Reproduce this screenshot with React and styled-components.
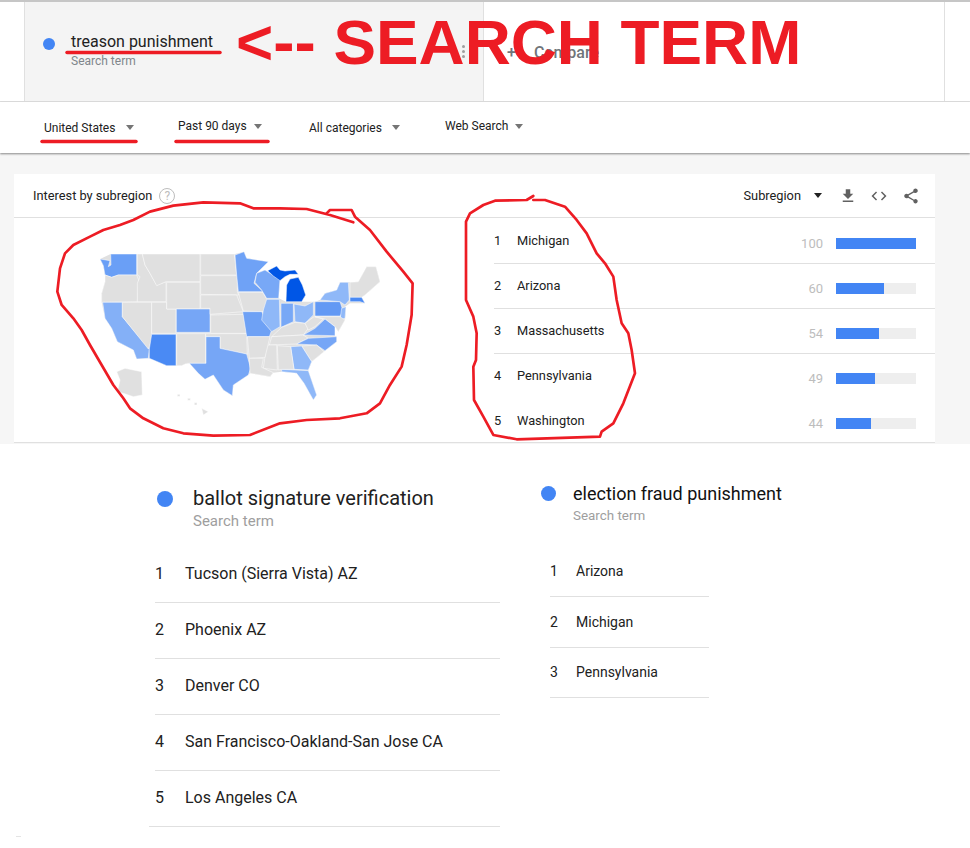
import styled, { createGlobalStyle } from "styled-components";

const GlobalStyle = createGlobalStyle`
  html, body {
    margin: 0;
    padding: 0;
    background: #fff;
    font-family: Roboto, "Liberation Sans", sans-serif;
  }
`;

const Page = styled.div`
  position: relative;
  width: 970px;
  height: 848px;
  overflow: hidden;
  background: #fff;
  color: #212121;
`;

const TermBar = styled.div`
  display: grid;
  grid-template-columns: 24px 460px 461px 1fr;
  height: 99px;
  border-top: 2px solid #c6c6c6;
  border-bottom: 1px solid #e0e0e0;
`;
const Spacer = styled.div``;
const TermPanel = styled.div`
  display: flex;
  align-items: flex-start;
  padding: 31px 18px 0 18px;
  background: #f4f4f4;
  border-left: 1px solid #e0e0e0;
  border-right: 1px solid #e0e0e0;
`;
const Dot = styled.span`
  flex: none;
  width: ${(p) => p.$size}px;
  height: ${(p) => p.$size}px;
  margin-top: ${(p) => p.$top}px;
  border-radius: 50%;
  background: #4285f4;
`;
const TermText = styled.div`
  flex: 1;
  margin-left: 16px;
  margin-top: -1px;
`;
const TermName = styled.div`
  font-size: 16px;
  line-height: 19px;
  color: #212121;
`;
const TermHint = styled.div`
  font-size: 12px;
  line-height: 15px;
  margin-top: 3px;
  color: #80868b;
`;
const Kebab = styled.span`
  display: flex;
  flex-direction: column;
  gap: 2px;
  margin-top: 12px;
  i {
    display: block;
    width: 3px;
    height: 3px;
    border-radius: 50%;
    background: #9e9e9e;
  }
`;
const ComparePanel = styled.div`
  display: flex;
  align-items: flex-start;
  gap: 18px;
  padding: 41px 0 0 23px;
  border-right: 1px solid #e0e0e0;
  color: #70757a;
  font-size: 16px;
  font-weight: 500;
  line-height: 19px;
`;

const FilterBar = styled.div`
  display: grid;
  grid-template-columns: 134px 131px 136px auto;
  align-items: center;
  height: 51px;
  padding-left: 44px;
  background: #fff;
  box-shadow: 0 1px 2px rgba(0, 0, 0, 0.45);
  position: relative;
`;
const Filter = styled.div`
  display: flex;
  align-items: center;
  font-size: 12px;
  line-height: 14px;
  color: #212121;
  margin-bottom: ${(p) => (p.$raised ? 3 : 0)}px;
`;
const Caret = styled.span`
  width: 0;
  height: 0;
  margin-left: ${(p) => p.$gap}px;
  border-left: 4px solid transparent;
  border-right: 4px solid transparent;
  border-top: 5px solid ${(p) => p.$color || "#757575"};
`;

const Content = styled.div`
  height: 291px;
  padding: 21px 35px 0 14px;
  background: #f6f6f6;
  box-sizing: border-box;
`;
const Card = styled.section`
  height: 269px;
  background: #fff;
  border-bottom: 1px solid #e0e0e0;
  box-sizing: border-box;
`;
const CardHeader = styled.header`
  display: flex;
  align-items: center;
  height: 43px;
  padding-left: 19px;
  border-bottom: 1px solid #e0e0e0;
`;
const CardTitle = styled.h2`
  margin: 0 7px 0 0;
  font-size: 12.8px;
  font-weight: 400;
  color: #212121;
`;
const HelpIcon = styled.span`
  display: flex;
  align-items: center;
  justify-content: center;
  width: 14px;
  height: 14px;
  border: 1px solid #bdbdbd;
  border-radius: 50%;
  font-size: 12px;
  color: #bdbdbd;
`;
const HeaderTools = styled.div`
  display: flex;
  align-items: center;
  margin-left: auto;
  padding-right: 15px;
  font-size: 12.8px;
  color: #212121;
`;
const ToolIcon = styled.svg`
  width: 18px;
  height: 18px;
  margin-left: ${(p) => p.$gap}px;
  fill: #616161;
`;
const CardBody = styled.div`
  display: grid;
  grid-template-columns: 480px 1fr;
`;
const MapBox = styled.div`
  padding-left: 26px;
  height: 224px;
  overflow: hidden;
`;
const MapSvg = styled.svg`
  display: block;
  width: 380px;
  height: 225px;
`;
const RegionList = styled.ol`
  margin: 0;
  padding: 1px 0 0;
  list-style: none;
`;
const RegionRow = styled.li`
  display: flex;
  align-items: center;
  height: 44px;
  border-bottom: 1px solid ${(p) => (p.$plain ? "transparent" : "#e0e0e0")};
  font-size: 12.8px;
  color: #212121;
`;
const Rank = styled.span`
  width: 23px;
  margin-bottom: 2px;
`;
const RegionName = styled.span`
  flex: 1;
  margin-bottom: 2px;
`;
const Score = styled.span`
  width: 40px;
  margin-top: 5px;
  text-align: right;
  font-size: 13px;
  color: #bdbdbd;
`;
const Track = styled.div`
  width: 80px;
  height: 11px;
  margin: 5px 19px 0 13px;
  background: #eeeeee;
`;
const Fill = styled.div`
  height: 100%;
  background: #4285f4;
`;

const Columns = styled.div`
  display: flex;
  padding-left: 155px;
  background: #fff;
`;
const TermColumn = styled.div`
  width: ${(p) => p.$width}px;
  margin-right: ${(p) => p.$gap || 0}px;
`;
const TermHeading = styled.div`
  display: flex;
  align-items: flex-start;
  height: ${(p) => (p.$small ? 63.5 : 60)}px;
  padding-top: ${(p) => (p.$small ? 39 : 43)}px;
  padding-left: ${(p) => (p.$small ? 0 : 2)}px;
  margin-left: ${(p) => (p.$small ? -9 : 0)}px;
`;
const HeadingText = styled.div`
  margin-left: ${(p) => (p.$small ? 17 : 20)}px;
  margin-top: -1px;
`;
const HeadingName = styled.div`
  font-size: ${(p) => (p.$small ? 18 : 20)}px;
  line-height: 24px;
  white-space: nowrap;
  color: ${(p) => (p.$small ? "#111" : "#212121")};
`;
const HeadingHint = styled.div`
  font-size: ${(p) => (p.$small ? 13.4 : 15)}px;
  line-height: 16px;
  margin-top: ${(p) => (p.$small ? 2 : 3)}px;
  color: #9e9e9e;
`;
const ResultList = styled.ol`
  margin: 0;
  padding: 0;
  list-style: none;
`;
const ResultRow = styled.li`
  display: flex;
  align-items: center;
  height: ${(p) => p.$height - 1 - (p.$lift || 0)}px;
  padding-bottom: ${(p) => p.$lift || 0}px;
  border-bottom: 1px solid #e0e0e0;
  font-size: ${(p) => p.$font}px;
  color: #212121;
  margin-left: ${(p) => (p.$outdent ? -6 : 0)}px;
  padding-left: ${(p) => (p.$outdent ? 6 : 0)}px;
`;
const ResultRank = styled.span`
  width: ${(p) => p.$width}px;
`;

const Annotations = styled.svg`
  position: absolute;
  left: 0;
  top: 0;
  width: 970px;
  height: 848px;
  pointer-events: none;
  fill: none;
  stroke: #ed1c24;
  stroke-linecap: round;
  stroke-linejoin: round;
`;
const Callout = styled.div`
  position: absolute;
  left: 236px;
  top: 4px;
  font-family: "Liberation Sans", Arial, sans-serif;
  font-weight: 700;
  font-size: 63.8px;
  line-height: 76px;
  white-space: nowrap;
  color: #ed1c24;
`;
const Speck = styled.span`
  position: absolute;
  left: 16px;
  top: 836px;
  width: 5px;
  height: 1px;
  background: #e4e4e4;
`;

const GREY = "#e0e0e0";
const LIGHT = "#8fb8f8";
const MID = "#76a6f6";
const LOWER_48 =
  "180,192 212,177 585,177 612,170 620,190 685,200 650,235 675,225 720,252 716,310 738,320 740,270 750,252 775,247 787,270 797,300 785,320 825,320 840,315 855,295 890,285 900,262 930,262 955,260 980,215 1008,215 1020,260 975,300 965,307 975,325 930,325 915,335 918,350 915,375 895,410 885,395 885,422 890,425 890,440 855,467 815,500 805,527 830,600 820,615 792,565 770,535 725,530 700,533 690,545 630,535 625,540 580,570 577,602 550,585 520,540 495,553 475,535 448,505 410,512 380,512 328,490 290,492 280,465 232,440 215,400 195,370 185,322 185,295 195,260 195,240 190,212";
const STATES = [
  ["#6a9ff6", "180,192 210,197 205,215 213,210 212,177 290,177 290,240 235,240 215,247 195,240 190,212"],
  [GREY, "195,240 215,247 235,240 290,240 296,255 292,320 185,322 185,295 195,260"],
  ["#84b0f7", "188,322 247,322 247,365 328,462 325,490 290,492 280,465 232,440 215,400 195,370"],
  [GREY, "292,177 307,177 315,210 330,235 350,270 378,260 378,320 292,320 292,265 300,245 292,240"],
  [GREY, "307,177 480,177 480,260 378,260 350,272 330,235 315,210"],
  [GREY, "247,322 335,322 335,438 325,462 247,365"],
  [GREY, "335,322 380,322 380,342 408,342 408,415 335,415"],
  ["#4a8af4", "335,418 408,418 408,512 380,512 328,490 328,462"],
  [GREY, "380,262 480,262 480,342 380,342"],
  [MID, "409,342 510,342 510,412 409,412"],
  [GREY, "410,416 497,416 497,505 440,505 425,512 410,512"],
  [GREY, "482,177 583,177 590,240 482,240"],
  [GREY, "482,242 592,242 592,290 596,300 482,298"],
  [GREY, "482,300 590,300 610,350 510,358 510,340 482,340"],
  [GREY, "512,360 610,358 620,415 512,415"],
  [GREY, "497,416 620,416 622,478 560,465 540,460 540,425 497,425"],
  [MID, "498,425 540,425 540,460 620,477 632,520 625,540 580,570 577,602 550,585 520,540 495,553 475,535 448,505 498,505"],
  ["#6fa2f6", "585,180 612,170 620,190 685,200 650,235 642,265 670,290 595,290 590,240"],
  [GREY, "595,292 668,292 685,320 670,350 610,348"],
  ["#6ea1f5", "608,350 665,350 695,405 688,425 620,425"],
  ["#78a8f6", "650,235 675,225 690,235 720,252 716,310 680,310 665,285 645,262"],
  [LIGHT, "680,313 718,313 720,395 695,410 665,375 670,345"],
  ["#0056e6", "738,320 740,270 750,252 775,247 787,270 797,300 785,320"],
  ["#0056e6", "683,227 710,213 720,225 735,228 765,225 775,238 750,238 735,245 720,257 700,243"],
  ["#78a8f6", "723,325 760,325 760,380 723,397"],
  [LIGHT, "762,327 795,333 820,320 820,360 795,385 765,380"],
  ["#6399f4", "825,320 900,320 910,350 900,363 825,363"],
  [LIGHT, "840,315 855,295 890,285 900,262 925,262 928,315 915,330 900,320"],
  [GREY, "930,262 955,260 980,215 1008,215 1020,260 975,300 965,307 930,307"],
  ["#4a8af4", "930,307 965,307 975,325 960,320 930,320"],
  [LIGHT, "905,340 918,335 915,370 900,375"],
  [GREY, "695,425 725,397 765,382 795,385 805,400 790,420"],
  [GREY, "688,450 695,425 790,420 805,430 770,447"],
  [GREY, "795,385 822,365 850,372 825,395 805,405"],
  [GREY, "825,365 900,365 915,375 895,410 885,395 855,372"],
  [MID, "790,420 825,400 855,372 885,395 885,422"],
  [MID, "770,447 805,430 890,425 890,440 855,467 830,450"],
  [GREY, "785,453 830,450 852,470 815,500"],
  [LIGHT, "752,455 785,453 815,500 805,525 762,523"],
  [LIGHT, "725,523 805,527 830,600 820,615 792,565 770,535 725,530"],
  [GREY, "712,452 752,455 762,523 725,523 715,525"],
  [GREY, "680,450 710,450 712,525 670,520"],
  [GREY, "622,425 690,425 675,487 628,490"],
  [GREY, "628,490 670,490 665,517 700,533 690,545 630,535"],
  [GREY, "230,530 255,520 305,530 307,600 280,605 250,595 232,590 240,555"],
  [GREY, "485,640 505,650 490,660"],
  [GREY, "412,598 420,598 420,604 412,604"],
  [GREY, "443,610 451,610 451,616 443,616"],
  [GREY, "463,623 471,623 471,630 463,630"],
];

const MAP_LOOP =
  "940,82 870,60 800,42 720,40 640,40 600,25 490,22 400,32 330,50 280,75 240,90 190,105 150,125 100,150 75,175 60,220 52,290 65,330 100,370 125,405 150,450 185,510 220,570 250,610 270,640 310,670 370,700 430,715 520,722 630,720 720,685 800,675 900,670 980,655 1020,625 1050,570 1085,515 1100,450 1115,360 1118,265 1090,230 1040,170 990,105 945,65 935,45 870,45 860,55";
const LIST_LOOP =
  "250,78 230,90 135,92 100,105 60,130 48,155 48,390 70,440 80,490 78,570 70,590 72,690 100,740 130,795 200,808 450,800 455,785 490,760 520,700 555,610 545,540 535,490 515,460 500,390 490,320 465,280 440,250 410,190 380,150 345,110 285,90 250,90";

const REGIONS = [
  ["Michigan", 100],
  ["Arizona", 60],
  ["Massachusetts", 54],
  ["Pennsylvania", 49],
  ["Washington", 44],
];
const METROS = [
  "Tucson (Sierra Vista) AZ",
  "Phoenix AZ",
  "Denver CO",
  "San Francisco-Oakland-San Jose CA",
  "Los Angeles CA",
];
const STATES_FRAUD = ["Arizona", "Michigan", "Pennsylvania"];

const App = () => {
  return (
    <Page>
      <GlobalStyle />
      <TermBar>
        <Spacer />
        <TermPanel>
          <Dot $size={12} $top={5} />
          <TermText>
            <TermName>treason punishment</TermName>
            <TermHint>Search term</TermHint>
          </TermText>
          <Kebab>
            <i />
            <i />
            <i />
          </Kebab>
        </TermPanel>
        <ComparePanel>
          <span>+</span>
          <span>Compare</span>
        </ComparePanel>
        <Spacer />
      </TermBar>

      <FilterBar>
        <Filter>
          United States
          <Caret $gap={11} />
        </Filter>
        <Filter $raised>
          Past 90 days
          <Caret $gap={7} />
        </Filter>
        <Filter>
          All categories
          <Caret $gap={10} />
        </Filter>
        <Filter $raised>
          Web Search
          <Caret $gap={7} />
        </Filter>
      </FilterBar>

      <Content>
        <Card>
          <CardHeader>
            <CardTitle>Interest by subregion</CardTitle>
            <HelpIcon>?</HelpIcon>
            <HeaderTools>
              Subregion
              <Caret $gap={13} $color="#212121" />
              <ToolIcon $gap={17} viewBox="0 0 24 24">
                <path d="M19 9h-4V3H9v6H5l7 7 7-7zM5 18v2h14v-2H5z" />
              </ToolIcon>
              <ToolIcon $gap={13} viewBox="0 0 24 24">
                <path d="M9.4 16.6L4.8 12l4.6-4.6L8 6l-6 6 6 6 1.4-1.4zm5.2 0l4.6-4.6-4.6-4.6L16 6l6 6-6 6-1.4-1.4z" />
              </ToolIcon>
              <ToolIcon $gap={14} viewBox="0 0 24 24">
                <path d="M18 16.08c-.76 0-1.44.3-1.96.77L8.91 12.7c.05-.23.09-.46.09-.7s-.04-.47-.09-.7l7.05-4.11c.54.5 1.25.81 2.04.81 1.66 0 3-1.34 3-3s-1.34-3-3-3-3 1.34-3 3c0 .24.04.47.09.7L8.04 9.81C7.5 9.31 6.79 9 6 9c-1.66 0-3 1.34-3 3s1.34 3 3 3c.79 0 1.5-.31 2.04-.81l7.12 4.16c-.05.21-.08.43-.08.65 0 1.61 1.31 2.92 2.92 2.92 1.61 0 2.92-1.31 2.92-2.92s-1.31-2.92-2.92-2.92z" />
              </ToolIcon>
            </HeaderTools>
          </CardHeader>
          <CardBody>
            <MapBox>
              <MapSvg viewBox="0 69 1140 675">
                <polygon points={LOWER_48} fill={GREY} />
                {STATES.map(([color, points]) => (
                  <polygon
                    key={points}
                    points={points}
                    fill={color}
                    stroke="#fff"
                    strokeOpacity="0.75"
                    strokeWidth="2"
                    strokeLinejoin="round"
                  />
                ))}
              </MapSvg>
            </MapBox>
            <RegionList>
              {REGIONS.map(([name, score], i) => (
                <RegionRow key={name} $plain={i >= 3}>
                  <Rank>{i + 1}</Rank>
                  <RegionName>{name}</RegionName>
                  <Score>{score}</Score>
                  <Track>
                    <Fill style={{ width: `${score}%` }} />
                  </Track>
                </RegionRow>
              ))}
            </RegionList>
          </CardBody>
        </Card>
      </Content>

      <Columns>
        <TermColumn $width={345} $gap={50}>
          <TermHeading>
            <Dot $size={16} $top={4} />
            <HeadingText>
              <HeadingName>ballot signature verification</HeadingName>
              <HeadingHint>Search term</HeadingHint>
            </HeadingText>
          </TermHeading>
          <ResultList>
            {METROS.map((name, i) => (
              <ResultRow
                key={name}
                $height={56}
                $font={16}
                $lift={2}
                $outdent={i === METROS.length - 1}
              >
                <ResultRank $width={30}>{i + 1}</ResultRank>
                {name}
              </ResultRow>
            ))}
          </ResultList>
        </TermColumn>
        <TermColumn $width={159}>
          <TermHeading $small>
            <Dot $size={15} $top={3} />
            <HeadingText $small>
              <HeadingName $small>election fraud punishment</HeadingName>
              <HeadingHint $small>Search term</HeadingHint>
            </HeadingText>
          </TermHeading>
          <ResultList>
            {STATES_FRAUD.map((name, i) => (
              <ResultRow key={name} $height={50.5} $font={14}>
                <ResultRank $width={26}>{i + 1}</ResultRank>
                {name}
              </ResultRow>
            ))}
          </ResultList>
        </TermColumn>
      </Columns>

      <Speck />
      <Callout>{"<-- SEARCH TERM"}</Callout>
      <Annotations viewBox="0 0 970 848">
        <path d="M67 52.5 H220" strokeWidth="3.5" />
        <path d="M42 141.5 H136" strokeWidth="3.5" />
        <path d="M176 141.5 H268" strokeWidth="3.5" />
        <g transform="translate(40 195) scale(0.3333)">
          <polyline points={MAP_LOOP} strokeWidth="8" />
        </g>
        <g transform="translate(450 170) scale(0.3333)">
          <polyline points={LIST_LOOP} strokeWidth="8" />
        </g>
      </Annotations>
    </Page>
  );
};

export default App;
